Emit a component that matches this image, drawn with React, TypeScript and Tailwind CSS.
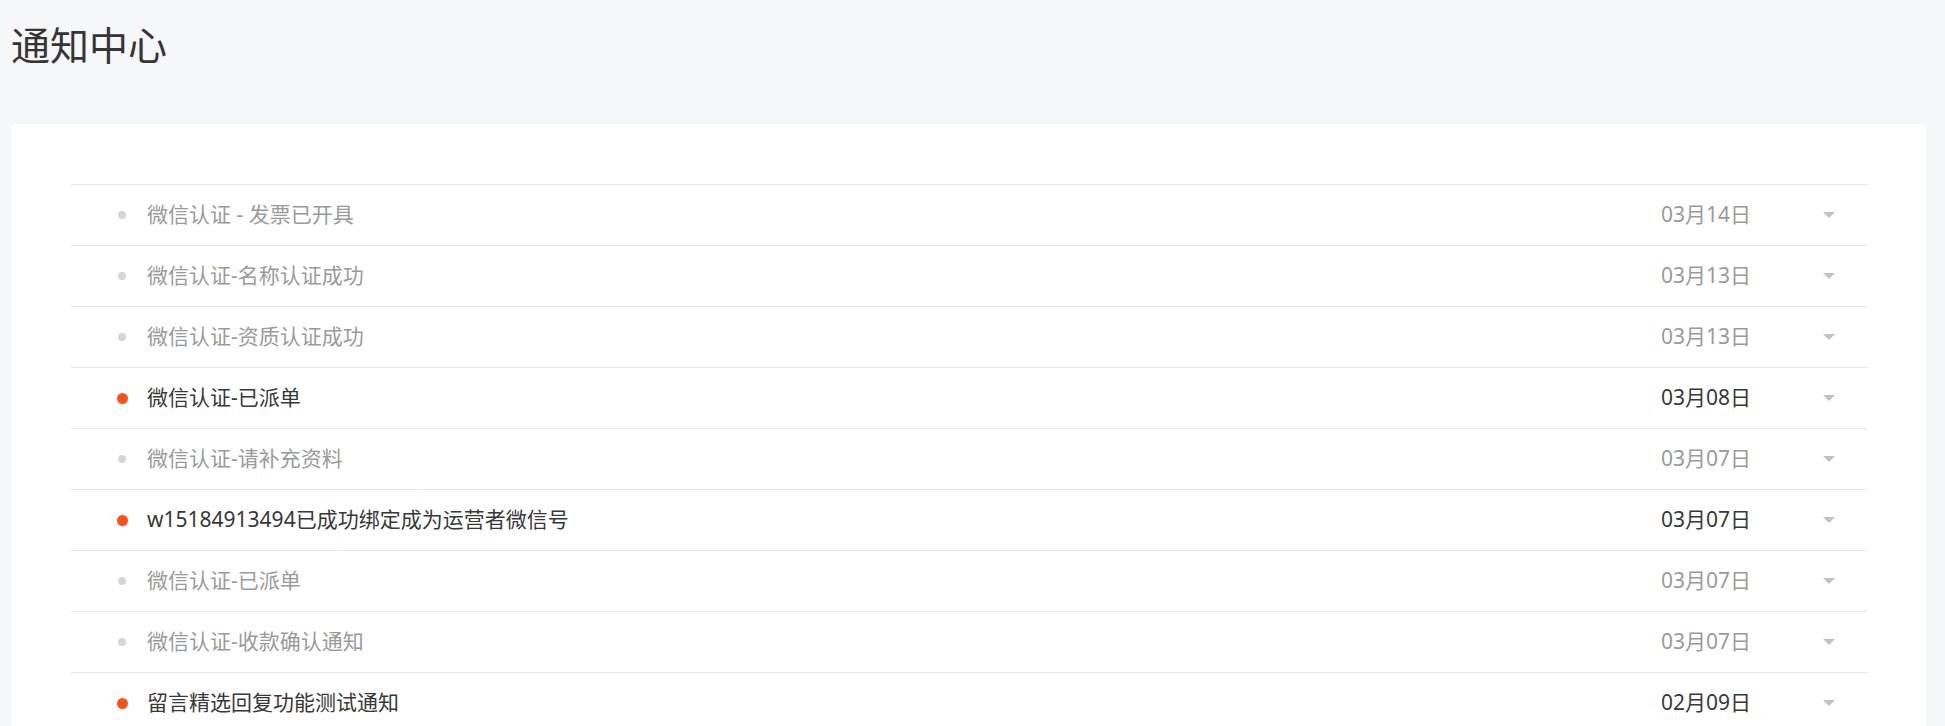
const FONT = '"Noto Sans", "Noto Sans CJK SC", sans-serif'

type Notice = { title: string; date: string; unread: boolean }

const NOTICES: Notice[] = [
  { title: '微信认证 - 发票已开具', date: '03月14日', unread: false },
  { title: '微信认证-名称认证成功', date: '03月13日', unread: false },
  { title: '微信认证-资质认证成功', date: '03月13日', unread: false },
  { title: '微信认证-已派单', date: '03月08日', unread: true },
  { title: '微信认证-请补充资料', date: '03月07日', unread: false },
  { title: 'w15184913494已成功绑定成为运营者微信号', date: '03月07日', unread: true },
  { title: '微信认证-已派单', date: '03月07日', unread: false },
  { title: '微信认证-收款确认通知', date: '03月07日', unread: false },
  { title: '留言精选回复功能测试通知', date: '02月09日', unread: true },
]

const Caret = () => (
  <svg width="12" height="6" viewBox="0 0 12 6" className="block">
    <polygon points="0,0 12,0 6,6" fill="#c2c2c2" />
  </svg>
)

const NoticeRow = ({ notice }: { notice: Notice }) => (
  <div className="flex items-center h-[61px] border-b border-[#e7e7e7] pl-[45px]">
    <div className="w-[12px] flex items-center justify-center shrink-0">
      {notice.unread ? (
        <span className="block w-[11px] h-[11px] rounded-full bg-[#fa5119]" />
      ) : (
        <span className="block w-[8px] h-[8px] rounded-full bg-[#d6d6d6]" />
      )}
    </div>
    <div className={`flex-1 min-w-0 ml-[19px] text-[21px] ${notice.unread ? 'text-[#383838]' : 'text-[#9a9a9a]'}`}>
      {notice.title}
    </div>
    <div className={`w-[162px] shrink-0 text-[21px] ${notice.unread ? 'text-[#383838]' : 'text-[#9a9a9a]'}`}>
      {notice.date}
    </div>
    <div className="w-[12px] shrink-0 mr-[32px] flex items-center justify-center">
      <Caret />
    </div>
  </div>
)

export default function App() {
  return (
    <div className="min-h-screen bg-[#f6f7f9] pl-[11px] pr-[18px] pt-[23px]" style={{ fontFamily: FONT }}>
      <h1 className="text-[39px] leading-[44px] font-normal text-[#353535]">通知中心</h1>

      <div className="mt-[57px] bg-white rounded-[5px] px-[60px] pt-[60px] pb-[40px]">
        <div className="border-t border-[#e7e7e7]">
          {NOTICES.map((n, i) => (
            <NoticeRow key={i} notice={n} />
          ))}
        </div>
      </div>
    </div>
  )
}
